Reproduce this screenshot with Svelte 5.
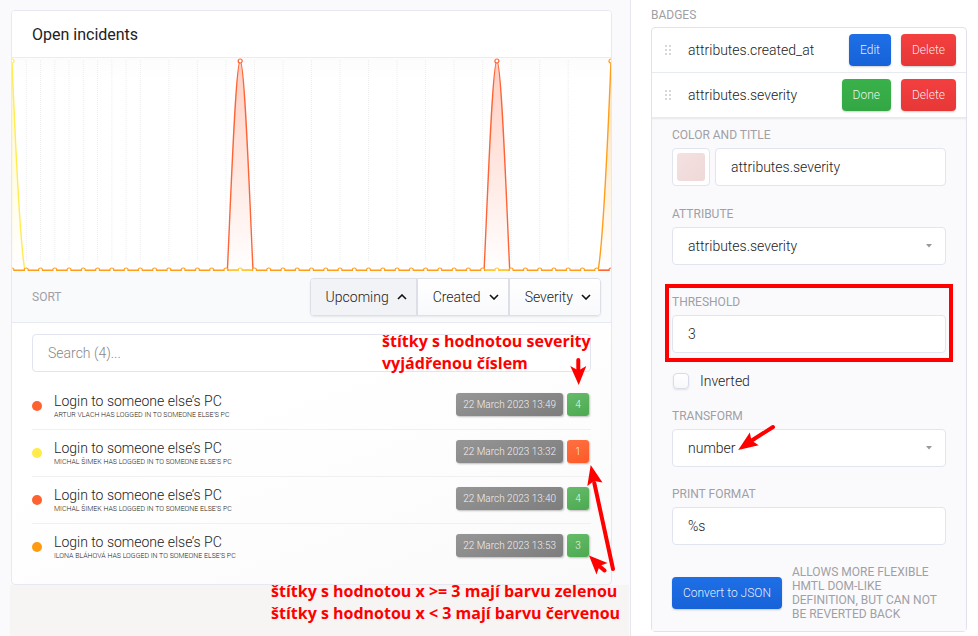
<script lang="ts">
	const POINTS = 42;
	const BASE = 212;
	const TOP = 3;
	const gridIndexes = [0, 1, 2, 3, 4, 5, 6, 7, 8, 9, 11, 13, 15, 17, 19, 21, 23, 25, 27, 29, 31, 33, 35, 37, 39];
	const peaks = [16, 34];

	let chartWidth = $state(599);
	let step = $derived(chartWidth / POINTS);

	const dots = Array.from({ length: POINTS + 1 }, (_, i) => i);

	function peakPath(x: number) {
		return `M${x - 12.8} ${BASE} C${x - 9.5} 142 ${x - 4.5} ${TOP} ${x} ${TOP} S${x + 9.5} 142 ${x + 12.8} ${BASE}`;
	}

	let firstPath = $derived(`M0 ${TOP} C2 52 7 178 12.8 ${BASE}`);
	let lastPath = $derived(
		`M${chartWidth} ${TOP} C${chartWidth - 2} 52 ${chartWidth - 7} 178 ${chartWidth - 12.8} ${BASE}`
	);

	const sorts = [
		{ label: "Upcoming", active: true },
		{ label: "Created", active: false },
		{ label: "Severity", active: false },
	];

	const incidents = [
		{ tone: "red", user: "Artur Vlach", date: "22 March 2023 13:49", severity: 4 },
		{ tone: "yellow", user: "Michal Šimek", date: "22 March 2023 13:32", severity: 1 },
		{ tone: "red", user: "Michal Šimek", date: "22 March 2023 13:40", severity: 4 },
		{ tone: "orange", user: "Ilona Bláhová", date: "22 March 2023 13:53", severity: 3 },
	];

	let search = $state("");
	let title = $state("attributes.severity");
	let threshold = $state("3");
	let inverted = $state(false);
	let format = $state("%s");
</script>

{#snippet grip()}
	<svg class="grip" width="8" height="12" viewBox="0 0 8 12" aria-hidden="true">
		{#each [1, 5, 9] as y}
			<rect x="1" {y} width="2" height="2" />
			<rect x="5" {y} width="2" height="2" />
		{/each}
	</svg>
{/snippet}

<div class="page">
	<main class="preview">
		<section class="card">
			<h1 class="card__title">Open incidents</h1>

			<div class="chart" bind:clientWidth={chartWidth}>
				<svg width={chartWidth} height="213" role="img" aria-label="Open incidents over time">
					<defs>
						<linearGradient id="fill-red" x1="0" y1="0" x2="0" y2="1">
							<stop offset="0" stop-color="#ff5c30" stop-opacity="0.3" />
							<stop offset="1" stop-color="#ff5c30" stop-opacity="0" />
						</linearGradient>
						<linearGradient id="fill-yellow" x1="0" y1="0" x2="0" y2="1">
							<stop offset="0" stop-color="#ffeb3b" stop-opacity="0.3" />
							<stop offset="1" stop-color="#ffeb3b" stop-opacity="0" />
						</linearGradient>
						<linearGradient id="fill-orange" x1="0" y1="0" x2="0" y2="1">
							<stop offset="0" stop-color="#ff9800" stop-opacity="0.3" />
							<stop offset="1" stop-color="#ff9800" stop-opacity="0" />
						</linearGradient>
					</defs>

					{#each gridIndexes as i}
						<line class="grid" x1={i * step} x2={i * step} y1="2" y2="204" />
					{/each}

					<path d={`${firstPath} H0 Z`} fill="url(#fill-yellow)" />
					<path d={`${lastPath} H${chartWidth} Z`} fill="url(#fill-orange)" />
					{#each peaks as i}
						<path d={`${peakPath(i * step)} Z`} fill="url(#fill-red)" />
					{/each}

					<line class="line line--orange" x1="0" x2={chartWidth} y1={BASE + 0.3} y2={BASE + 0.3} />
					<line class="line line--red" x1={chartWidth - 12} x2={chartWidth} y1={BASE + 0.3} y2={BASE + 0.3} />
					{#each peaks as i}
						<line
							class="line line--amber"
							x1={(i - 1) * step + 2}
							x2={(i + 1) * step - 2}
							y1={BASE + 0.3}
							y2={BASE + 0.3}
						/>
					{/each}

					<path class="line line--yellow" d={firstPath} />
					<path class="line line--orange" d={lastPath} />
					{#each peaks as i}
						<path class="line line--red" d={peakPath(i * step)} />
						<circle class="dot line--red" cx={i * step} cy={TOP} r="2" />
					{/each}
					<circle class="dot line--yellow" cx="0" cy={TOP} r="2" />
					<circle class="dot line--orange" cx={chartWidth} cy={TOP} r="2" />

					{#each dots as i}
						<circle
							class="dot"
							class:line--amber={peaks.includes(i)}
							class:line--red={i === POINTS}
							class:line--orange={!peaks.includes(i) && i !== POINTS}
							cx={i * step}
							cy={BASE}
							r="2"
						/>
					{/each}
				</svg>
			</div>

			<div class="sort">
				<span class="label">Sort</span>
				<div class="sort__buttons">
					{#each sorts as sort}
						<button type="button" class="sort__button" class:active={sort.active}>
							{sort.label}
							<svg width="10" height="6" viewBox="0 0 10 6" aria-hidden="true">
								<path d={sort.active ? "M1 5 L5 1 L9 5" : "M1 1 L5 5 L9 1"} />
							</svg>
						</button>
					{/each}
				</div>
			</div>

			<div class="list">
				<input class="input" type="text" aria-label="Search" placeholder="Search (4)..." bind:value={search} />
				<ul class="incidents">
					{#each incidents as incident}
						<li class="incident">
							<span class={`incident__dot ${incident.tone}`}></span>
							<div class="incident__text">
								<div class="incident__title">Login to someone else’s PC</div>
								<div class="incident__sub">{incident.user} has logged in to someone else’s PC</div>
							</div>
							<span class="badge">{incident.date}</span>
							<span class="badge" class:green={incident.severity >= 3} class:low={incident.severity < 3}>
								{incident.severity}
							</span>
						</li>
					{/each}
				</ul>
			</div>
		</section>
		<div class="backdrop"></div>
	</main>

	<aside class="settings">
		<h2 class="label settings__heading">Badges</h2>
		<div class="panel">
			<div class="attribute">
				{@render grip()}
				<span class="attribute__name">attributes.created_at</span>
				<button type="button" class="button">Edit</button>
				<button type="button" class="button button--red">Delete</button>
			</div>
			<div class="attribute">
				{@render grip()}
				<span class="attribute__name">attributes.severity</span>
				<button type="button" class="button button--green">Done</button>
				<button type="button" class="button button--red">Delete</button>
			</div>

			<form class="form">
				<div class="field field--title">
					<label class="label" for="title">Color and title</label>
					<div class="title-row">
						<button type="button" class="swatch" aria-label="Pick color"><span></span></button>
						<input class="input" id="title" type="text" bind:value={title} />
					</div>
				</div>
				<div class="field field--attribute">
					<label class="label" for="attribute">Attribute</label>
					<div class="select">
						<select class="input" id="attribute">
							<option>attributes.severity</option>
							<option>attributes.created_at</option>
						</select>
						<svg width="6" height="4" viewBox="0 0 6 4" aria-hidden="true"><path d="M0 0 H6 L3 3.5 Z" /></svg>
					</div>
				</div>
				<div class="field field--marked">
					<label class="label" for="threshold">Threshold</label>
					<input class="input" id="threshold" type="text" bind:value={threshold} />
				</div>
				<label class="check">
					<input type="checkbox" bind:checked={inverted} />
					Inverted
				</label>
				<div class="field">
					<label class="label" for="transform">Transform</label>
					<div class="select">
						<select class="input" id="transform">
							<option>number</option>
							<option>date</option>
						</select>
						<svg width="6" height="4" viewBox="0 0 6 4" aria-hidden="true"><path d="M0 0 H6 L3 3.5 Z" /></svg>
					</div>
				</div>
				<div class="field">
					<label class="label" for="format">Print format</label>
					<input class="input" id="format" type="text" bind:value={format} />
				</div>
				<div class="convert">
					<button type="button" class="button">Convert to JSON</button>
					<p class="label">Allows more flexible HMTL DOM-like definition, but can not be reverted back</p>
				</div>
			</form>
		</div>
	</aside>

	<p class="note note--top">štítky s hodnotou severity<br />vyjádřenou číslem</p>
	<p class="note note--bottom">
		štítky s hodnotou x &gt;= 3 mají barvu zelenou<br />štítky s hodnotou x &lt; 3 mají barvu červenou
	</p>
	<svg class="arrows" width="978" height="636" viewBox="0 0 978 636" aria-hidden="true">
		<path class="shaft" d="M578.3 360 V371 M613 569 L594.3 483 M604.5 570.5 L598 565 M773 427 L751 441" />
		<path
			d="M578.7 385 L570.3 366 L578.5 370.5 L586.3 366 Z
			M590.7 465 L602.5 482.5 L594 481 L587.3 486 Z
			M589 555.5 L607.5 563 L599.5 566 L596.5 574.5 Z
			M738.2 450 L749.8 432.5 L751.5 440.5 L758.7 445.3 Z"
		/>
	</svg>
</div>

<style>
	:global(body) {
		margin: 0;
		background: #fff;
	}
	.page {
		position: relative;
		display: flex;
		min-height: 100vh;
		overflow: hidden;
		font-family: Roboto, "Liberation Sans", sans-serif;
		font-size: 14px;
		font-weight: 300;
		color: #222;
	}
	.page * {
		box-sizing: border-box;
	}
	h1,
	h2,
	p,
	ul {
		margin: 0;
		padding: 0;
	}
	button,
	input,
	select {
		font: inherit;
		color: inherit;
		margin: 0;
	}
	.label {
		display: block;
		font-size: 12px;
		font-weight: 400;
		line-height: 14px;
		text-transform: uppercase;
		color: #a0a0a4;
	}

	/* preview */
	.preview {
		flex: 1;
		min-width: 0;
		display: flex;
		flex-direction: column;
		padding: 10px 0 0 10px;
		background: #fafafd;
		border-right: 1px solid #e6e6f0;
	}
	.card {
		margin: 0 18px 0 1px;
		border: 1px solid #e8e8f2;
		border-radius: 4px;
		background: linear-gradient(160deg, #fff 60%, #fafafa);
		overflow: hidden;
	}
	.card__title {
		padding: 1px 20px 0;
		font-size: 16px;
		font-weight: 400;
		line-height: 45px;
		background: #fff;
		border-bottom: 1px solid #ececf0;
	}
	.chart {
		height: 213px;
		background: linear-gradient(#fcfcfd, #fff 10%);
	}
	.chart svg {
		display: block;
	}
	.grid {
		stroke: #ededed;
		stroke-dasharray: 1 1;
	}
	.line {
		fill: none;
		stroke-width: 1.4;
	}
	.dot {
		fill: #fff;
		stroke-width: 1.2;
	}
	.line--red {
		stroke: #ff6437;
	}
	.line--yellow {
		stroke: #ffec50;
	}
	.line--amber {
		stroke: #ffc83c;
	}
	.line--orange {
		stroke: #ff9d1c;
	}
	.sort {
		display: flex;
		align-items: center;
		justify-content: space-between;
		height: 52px;
		padding: 0 10px 0 20px;
		background: #f9fafc;
		border-bottom: 1px solid #e8eaf2;
	}
	.sort__buttons {
		display: flex;
		border: 1px solid #dcdfe8;
		border-radius: 4px;
		box-shadow: 0 1px 2px rgba(0, 0, 0, 0.08);
		overflow: hidden;
	}
	.sort__button {
		display: flex;
		align-items: center;
		gap: 8px;
		height: 36px;
		padding: 0 9px 0 15px;
		border: 0;
		background: linear-gradient(#fff, #f8f9fb);
	}
	.sort__button + .sort__button {
		border-left: 2px solid #dcdfe8;
	}
	.sort__button.active {
		background: #f2f3f6;
	}
	.sort__button path {
		fill: none;
		stroke: #111;
		stroke-width: 1.6;
	}
	.list {
		padding: 11px 20px 13px;
	}
	.input {
		display: block;
		width: 100%;
		height: 38px;
		padding: 0 15px;
		border: 1px solid #e2e4ef;
		border-radius: 4px;
		background: #fff;
		outline: 0;
		appearance: none;
	}
	.input::placeholder {
		color: #888;
		opacity: 1;
	}
	.incidents {
		margin-top: 11px;
		list-style: none;
	}
	.incident {
		display: flex;
		align-items: center;
		height: 47px;
		padding: 0 2px 3px 0;
		border-bottom: 1px solid #f0f0f2;
	}
	.incident:last-child {
		border-bottom-color: transparent;
	}
	.incident__dot {
		width: 10px;
		height: 10px;
		margin: 3px 12px 0 0;
		border-radius: 50%;
	}
	.red {
		background: #ff6130;
	}
	.yellow {
		background: #ffeb4a;
	}
	.orange {
		background: #ff9b10;
	}
	.incident__text {
		flex: 1;
		padding-top: 3px;
	}
	.incident__title {
		line-height: 18px;
	}
	.incident__sub {
		font-size: 7px;
		line-height: 10px;
		text-transform: uppercase;
	}
	.badge {
		margin-left: 4px;
		min-width: 22px;
		padding: 0 7px;
		border-radius: 3px;
		font-size: 10px;
		line-height: 23px;
		text-align: center;
		color: rgba(255, 255, 255, 0.9);
		background: linear-gradient(160deg, #969696, #7d7d7d);
		box-shadow: 1px 1px 2px rgba(0, 0, 0, 0.25);
	}
	.badge.green {
		background: linear-gradient(160deg, #66bb6a, #4caa50);
	}
	.badge.low {
		background: linear-gradient(160deg, #ff7043, #fc5a26);
	}
	.backdrop {
		flex: 1;
		min-height: 51px;
		margin-right: 1px;
		background: #f6f5f4;
	}

	/* settings */
	.settings {
		width: 347px;
		flex: none;
		padding: 8px 11px 5px 20px;
	}
	.settings__heading {
		margin-bottom: 5px;
	}
	.panel {
		border: 1px solid #e2e2ee;
		border-radius: 4px;
		background: #fff;
	}
	.attribute {
		display: flex;
		align-items: center;
		gap: 10px;
		height: 45px;
		padding: 0 10px 0 12px;
		border-bottom: 1px solid #e8eaf2;
	}
	.grip {
		fill: #d8d8d8;
	}
	.attribute__name {
		flex: 1;
		padding-left: 6px;
	}
	.button {
		height: 32px;
		padding: 0 11px;
		border: 0;
		border-radius: 4px;
		font-size: 12px;
		white-space: nowrap;
		color: rgba(255, 255, 255, 0.9);
		background: linear-gradient(#1e6fe6, #1762d8);
		box-shadow: 0 1px 2px rgba(0, 0, 0, 0.2);
	}
	.button--red {
		background: linear-gradient(#f43f3f, #e63737);
	}
	.button--green {
		background: linear-gradient(#39b14a, #34a744);
	}
	.form {
		padding: 10px 20px;
		background: #fafafd;
		box-shadow: inset 0 2px 2px -1px rgba(0, 0, 0, 0.08);
	}
	.field {
		position: relative;
		margin-bottom: 20px;
	}
	.field .label {
		margin-bottom: 6px;
	}
	.field--title {
		margin-bottom: 21px;
	}
	.field--attribute {
		margin-bottom: 30px;
	}
	.field--marked {
		margin-bottom: 0;
	}
	/* red frame laid over the threshold field */
	.field--marked::after {
		content: "";
		position: absolute;
		inset: -11px -7px -9px;
		border: 4px solid #f00;
		pointer-events: none;
	}
	.title-row {
		display: flex;
		gap: 5px;
	}
	.swatch {
		flex: none;
		width: 38px;
		height: 38px;
		padding: 4px;
		border: 1px solid #e2e4ef;
		border-radius: 4px;
		background: #fff;
	}
	.swatch span {
		display: block;
		height: 28px;
		border-radius: 3px;
		background: linear-gradient(135deg, #f5e1e1, #eed8d8);
	}
	.select {
		position: relative;
	}
	.select svg {
		position: absolute;
		top: 17px;
		right: 14px;
		fill: #999;
		pointer-events: none;
	}
	.check {
		display: flex;
		align-items: center;
		gap: 11px;
		height: 56px;
		padding-left: 1px;
	}
	.check input {
		appearance: none;
		width: 16px;
		height: 16px;
		border: 1px solid #d8dce8;
		border-radius: 4px;
		background: linear-gradient(#fff, #f8f8fb);
		box-shadow: 0 1px 2px rgba(0, 0, 0, 0.1);
	}
	.convert {
		display: flex;
		align-items: center;
		gap: 10px;
	}

	/* annotations */
	.note {
		position: absolute;
		font-family: "Open Sans", "Noto Sans", sans-serif;
		font-size: 16px;
		font-weight: 700;
		line-height: 22px;
		white-space: nowrap;
		color: #f00;
	}
	.note--top {
		top: 330px;
		left: 382px;
	}
	.note--bottom {
		top: 580px;
		left: 271px;
	}
	.arrows {
		position: absolute;
		top: 0;
		left: 0;
		fill: #f00;
		pointer-events: none;
	}
	.shaft {
		fill: none;
		stroke: #f00;
		stroke-width: 4;
		stroke-linecap: round;
	}
</style>
